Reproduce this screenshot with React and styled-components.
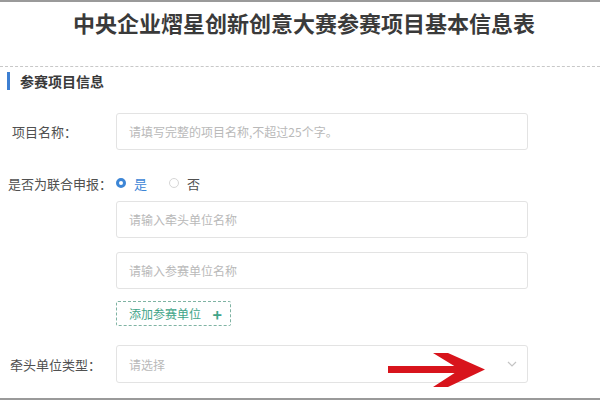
import React from 'react';
import styled, { createGlobalStyle } from 'styled-components';

const Global = createGlobalStyle`
  html, body {
    margin: 0;
    padding: 0;
    background: #fff;
  }
  body {
    font-family: "Noto Sans CJK SC", "Noto Sans", sans-serif;
  }
`;

const Page = styled.div`
  position: relative;
  width: 600px;
  height: 400px;
  box-sizing: border-box;
  border-top: 2px solid #9a9a9a;
  border-bottom: 2px solid #9a9a9a;
  overflow: hidden;
  display: flex;
  flex-direction: column;
`;

const Title = styled.h1`
  margin: 2px 0 0 8px;
  height: 36px;
  line-height: 36px;
  text-align: center;
  font-size: 22px;
  font-weight: 700;
  color: #3a3a3a;
  letter-spacing: 0;
`;

const Divider = styled.div`
  margin-top: 26px;
  border-top: 1px dashed #c8c8c8;
`;

const SectionHead = styled.div`
  margin-top: 5px;
  height: 18px;
  display: flex;
  align-items: center;
  padding-left: 7px;
  gap: 10px;
  font-size: 14px;
  font-weight: 700;
  color: #3a3a3a;
  &::before {
    content: '';
    width: 3px;
    height: 18px;
    background: #3d7fd2;
  }
`;

const Form = styled.div`
  margin-top: 23px;
  display: flex;
  flex-direction: column;
`;

const Row = styled.div`
  display: grid;
  grid-template-columns: 116px 412px;
  align-items: center;
  margin-top: ${(p) => p.gap || 0}px;
`;

const Label = styled.div`
  padding-left: ${(p) => p.indent ?? 10}px;
  font-size: 13px;
  color: #505050;
  white-space: nowrap;
`;

const Field = styled.div`
  grid-column: 2;
  height: ${(p) => p.h || 37}px;
  box-sizing: border-box;
  border: 1px solid #e3e3e3;
  border-radius: 3px;
  display: flex;
  align-items: center;
  justify-content: space-between;
  padding: 0 10px 0 12px;
  font-size: 12px;
  color: #b9b9b9;
`;

const Radios = styled.div`
  display: flex;
  align-items: center;
  font-size: 13px;
  height: 20px;
`;

const Radio = styled.span`
  display: inline-flex;
  align-items: center;
  gap: 8px;
  margin-right: 22px;
  color: ${(p) => (p.checked ? '#3d86d6' : '#505050')};
  &::before {
    content: '';
    width: 10px;
    height: 10px;
    box-sizing: border-box;
    border-radius: 50%;
    border: ${(p) => (p.checked ? '3px solid #3d86d6' : '1px solid #d6d6d6')};
    background: #fff;
  }
`;

const AddButton = styled.div`
  grid-column: 2;
  justify-self: start;
  width: 115px;
  height: 25px;
  box-sizing: border-box;
  border: 1px dashed #7fb3a3;
  border-radius: 2px;
  display: flex;
  align-items: center;
  justify-content: space-between;
  padding: 0 8px 0 12px;
  font-size: 12px;
  color: #3fa488;
  span {
    font-size: 16px;
    font-weight: 700;
  }
`;

const Arrow = styled.svg`
  position: absolute;
  left: 386px;
  top: 349px;
`;

export default function App() {
  return (
    <>
      <Global />
      <Page>
        <Title>中央企业熠星创新创意大赛参赛项目基本信息表</Title>
        <Divider />
        <SectionHead>参赛项目信息</SectionHead>
        <Form>
          <Row>
            <Label indent={12}>项目名称：</Label>
            <Field>请填写完整的项目名称,不超过25个字。</Field>
          </Row>
          <Row gap={23}>
            <Label indent={8}>是否为联合申报：</Label>
            <Radios>
              <Radio checked>是</Radio>
              <Radio>否</Radio>
            </Radios>
          </Row>
          <Row gap={8}>
            <Field>请输入牵头单位名称</Field>
          </Row>
          <Row gap={14}>
            <Field>请输入参赛单位名称</Field>
          </Row>
          <Row gap={12}>
            <AddButton>
              添加参赛单位<span>+</span>
            </AddButton>
          </Row>
          <Row gap={19}>
            <Label>牵头单位类型：</Label>
            <Field h={38}>
              请选择
              <svg width="10" height="6" viewBox="0 0 10 6">
                <path d="M1 1l4 4 4-4" fill="none" stroke="#c4c4c4" strokeWidth="1.2" />
              </svg>
            </Field>
          </Row>
        </Form>
        <Arrow width="102" height="38" viewBox="0 0 102 38">
          <rect x="2" y="15" width="72" height="7" fill="#d8141c" />
          <polygon points="47,2 62,2 99,18.5 62,36 47,36 74,18.5" fill="#d8141c" />
        </Arrow>
      </Page>
    </>
  );
}
